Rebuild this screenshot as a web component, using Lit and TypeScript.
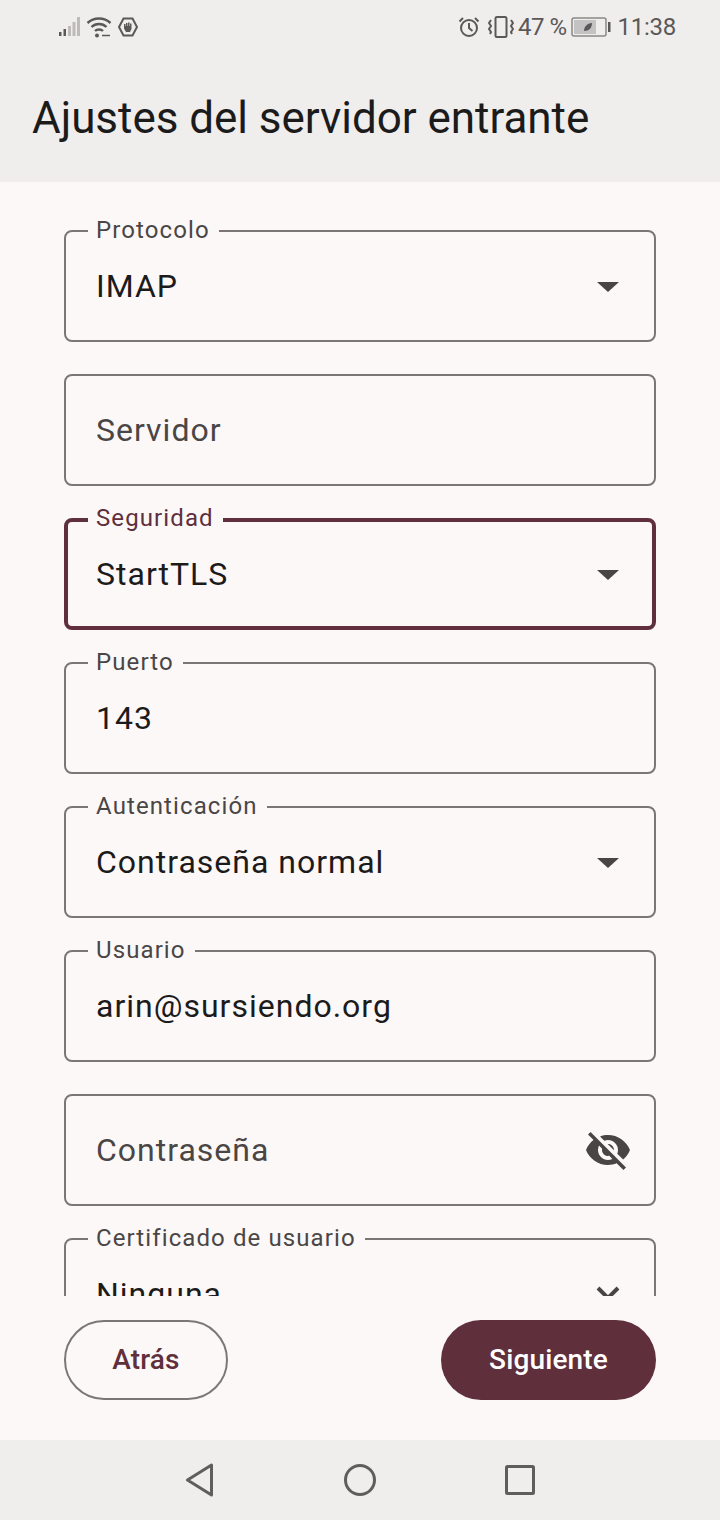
import { LitElement, html, css } from "lit";
import { customElement } from "lit/decorators.js";

const caret = html`<svg class="trail" width="48" height="48" viewBox="0 0 48 48"><path d="M13 20h22L24 30z" fill="#484545"/></svg>`;
const eyeOff = html`<svg class="trail" width="48" height="48" viewBox="0 0 24 24"><path fill="#484545" d="M12 7c2.76 0 5 2.24 5 5 0 .65-.13 1.26-.36 1.83l2.92 2.92c1.51-1.26 2.7-2.89 3.43-4.75-1.73-4.39-6-7.5-11-7.5-1.4 0-2.74.25-3.98.7l2.16 2.16C10.74 7.13 11.35 7 12 7zM2 4.27l2.28 2.28.46.46C3.08 8.3 1.78 10.02 1 12c1.73 4.39 6 7.5 11 7.5 1.55 0 3.03-.3 4.38-.84l.42.42L19.73 22 21 20.73 3.27 3 2 4.27zM7.53 9.8l1.55 1.55c-.05.21-.08.43-.08.65 0 1.66 1.34 3 3 3 .22 0 .44-.03.65-.08l1.55 1.55c-.67.33-1.41.53-2.2.53-2.76 0-5-2.24-5-5 0-.79.2-1.53.53-2.2zm4.31-.78l3.15 3.15.02-.16c0-1.66-1.34-3-3-3l-.17.01z"/></svg>`;
const chevron = html`<svg class="trail" width="48" height="48" viewBox="0 0 48 48"><path d="M14 18l10 10 10-10" fill="none" stroke="#484545" stroke-width="4"/></svg>`;

const fields: { label?: string; value?: string; placeholder?: string; trail?: unknown; focus?: boolean }[] = [
  { label: "Protocolo", value: "IMAP", trail: caret },
  { placeholder: "Servidor" },
  { label: "Seguridad", value: "StartTLS", trail: caret, focus: true },
  { label: "Puerto", value: "143" },
  { label: "Autenticación", value: "Contraseña normal", trail: caret },
  { label: "Usuario", value: "arin@sursiendo.org" },
  { placeholder: "Contraseña", trail: eyeOff },
  { label: "Certificado de usuario", value: "Ninguna", trail: chevron },
];

@customElement("app-root")
export class AppRoot extends LitElement {
  static styles = css`
    :host { display: flex; flex-direction: column; width: 720px; height: 1520px; background: #fcf8f8; font-family: Roboto, "Noto Sans", sans-serif; color: #1c1b1b; overflow: hidden; }
    .head { background: #f0eded; height: 182px; flex: none; display: flex; flex-direction: column; }
    .status { height: 54px; padding: 0 44px 0 59px; display: flex; align-items: center; justify-content: space-between; color: #5a5858; font-size: 24px; flex: none; box-sizing: border-box; }
    .left, .right { display: flex; align-items: center; }
    .left { gap: 5px; }
    .right { gap: 4px; }
    .status svg { display: block; flex: none; }
    .pct { margin-right: 1px; letter-spacing: -0.5px; }
    .time { margin-left: 2px; letter-spacing: -0.25px; }
    .title { margin: 0; padding: 42px 0 0 32px; font-size: 44px; font-weight: 400; line-height: 44px; letter-spacing: -0.04px; white-space: nowrap; }
    .form { flex: none; height: 1114px; overflow: hidden; padding: 48px 64px 0; display: flex; flex-direction: column; gap: 32px; box-sizing: border-box; }
    .field { position: relative; flex: none; height: 112px; border: 2px solid #7a7776; border-radius: 8px; box-sizing: border-box; display: flex; align-items: center; justify-content: space-between; padding: 0 22px 0 30px; font-size: 32px; letter-spacing: 1px; }
    .field.focus { border: 4px solid #5f2f3c; padding: 0 20px 0 28px; }
    .label { position: absolute; left: 22px; top: -14px; padding: 0 9px 0 8px; background: #fcf8f8; font-size: 24px; line-height: 24px; letter-spacing: 1.1px; color: #4a4646; white-space: nowrap; }
    .focus .label { left: 20px; top: -16px; color: #5f2f3c; }
    .ph { color: #4a4646; }
    .trail { flex: none; display: block; }
    .actions { flex: none; display: flex; justify-content: space-between; padding: 24px 64px 40px; }
    .btn { height: 80px; border-radius: 40px; display: flex; align-items: center; justify-content: center; font-size: 28px; font-weight: 500; letter-spacing: 0.15px; box-sizing: border-box; padding-bottom: 2px; }
    .back { width: 164px; border: 2px solid #7a7776; color: #5f2f3c; }
    .next { width: 215px; background: #5f2f3c; color: #fff; }
    .nav { flex: none; height: 80px; background: #f0eded; display: flex; justify-content: center; align-items: center; gap: 128px; }
    .nav svg { display: block; }
  `;

  render() {
    return html`
      <div class="head">
        <div class="status">
          <div class="left">
            <svg width="22" height="22" viewBox="0 0 22 22"><g fill="#5a5858"><rect x="0" y="16" width="2.500" height="4"/><rect x="4.500" y="13" width="2.500" height="7"/></g><g fill="#bdbaba"><rect x="9" y="10" width="3" height="10"/><rect x="13.500" y="6" width="3" height="14"/><rect x="18" y="1" width="3" height="19"/></g></svg>
            <svg width="26" height="22" viewBox="0 0 26 22" fill="none" stroke="#5a5858" stroke-width="2.400"><path d="M1.500 7c6.500-6 16.500-6 23 0M5.500 11c4-4 11-4 15 0M9 15c2-2 6-2 8 0"/><circle cx="11" cy="19.500" r="2" fill="#5a5858" stroke="none"/><path d="M16 19.500h8" stroke-width="1.500"/></svg>
            <svg style="margin-left:1px" width="20" height="20" viewBox="0 0 20 20"><path d="M5.500 1.500h9L19 10l-4.500 8.500h-9L1 10z" fill="none" stroke="#5a5858" stroke-width="2"/><path d="M6 7h1.500v2H8V6h1.500v3h.5V5.500h1.500V9h.5V6.500h1.500V12l-1.500 3H8l-2-3.500z" fill="#5a5858"/></svg>
          </div>
          <div class="right">
            <svg width="22" height="22" viewBox="0 0 22 22" fill="none" stroke="#5a5858" stroke-width="2"><circle cx="11" cy="12" r="8"/><path d="M11 7v5l3.500 3M1.500 5.500L5 2M20.500 5.500L17 2"/></svg>
            <svg style="margin-left:4px" width="26" height="22" viewBox="0 0 26 22" fill="none" stroke="#5a5858" stroke-width="2"><rect x="7.500" y="1" width="11" height="20" rx="1.500"/><path d="M3 4L1 7l2 3-2 3 2 3-1 2M23 4l2 3-2 3 2 3-2 3 1 2"/></svg>
            <span class="pct">47 %</span>
            <svg width="40" height="20" viewBox="0 0 40 20"><rect x="1" y="1" width="34" height="18" rx="2" fill="none" stroke="#8a8888" stroke-width="1.500"/><rect x="3" y="3" width="22" height="14" fill="#c4c2c2"/><path d="M13 14c0-5 4-8 8-8 0 5-3 8-8 8z" fill="#5a5858"/><rect x="37" y="5" width="2.500" height="10" fill="#5a5858"/></svg>
            <span class="time">11:38</span>
          </div>
        </div>
        <h1 class="title">Ajustes del servidor entrante</h1>
      </div>
      <div class="form">
        ${fields.map(
          (f) => html`<div class="field ${f.focus ? "focus" : ""}">
            ${f.label ? html`<span class="label">${f.label}</span>` : ""}
            <span class="${f.placeholder ? "ph" : ""}">${f.value ?? f.placeholder}</span>
            ${f.trail ?? ""}
          </div>`
        )}
      </div>
      <div class="actions">
        <div class="btn back">Atrás</div>
        <div class="btn next">Siguiente</div>
      </div>
      <div class="nav">
        <svg width="32" height="34" viewBox="0 0 32 34" fill="none" stroke="#5f5d5d" stroke-width="3" stroke-linejoin="round"><path d="M27.500 2v30L3.500 17z"/></svg>
        <svg width="32" height="34" viewBox="0 0 32 34" fill="none" stroke="#5f5d5d" stroke-width="3"><circle cx="16" cy="17" r="14.500"/></svg>
        <svg width="32" height="34" viewBox="0 0 32 34" fill="none" stroke="#5f5d5d" stroke-width="3" stroke-linejoin="round"><rect x="2.500" y="3.500" width="27" height="27" rx="1"/></svg>
      </div>
    `;
  }
}
